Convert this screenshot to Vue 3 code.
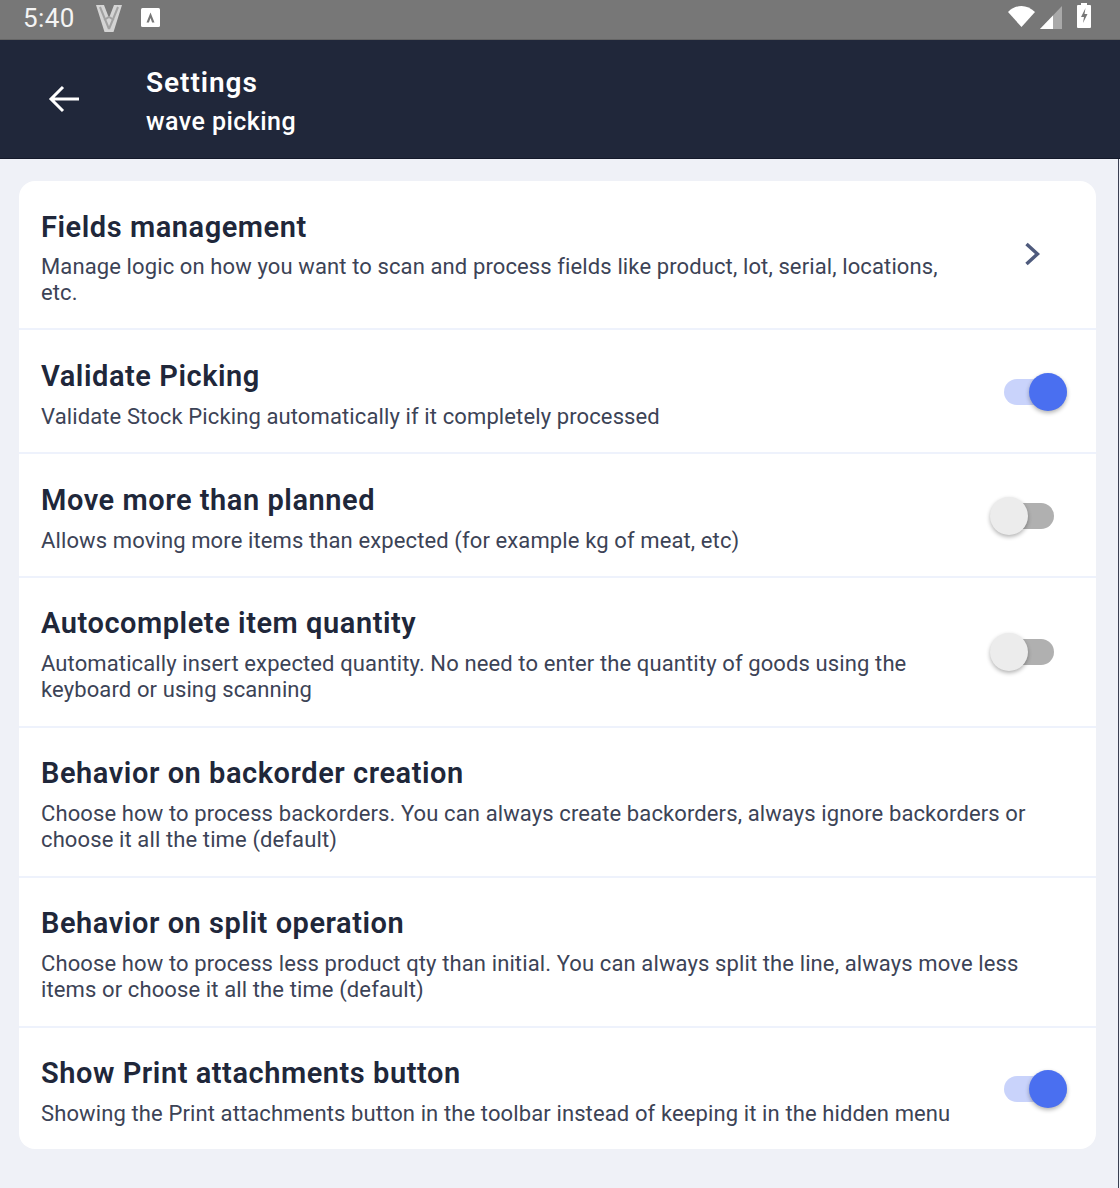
<script setup>
const rows = [
  { title: 'Fields management', desc: 'Manage logic on how you want to scan and process fields like product, lot, serial, locations, etc.', kind: 'chevron' },
  { title: 'Validate Picking', desc: 'Validate Stock Picking automatically if it completely processed', kind: 'on' },
  { title: 'Move more than planned', desc: 'Allows moving more items than expected (for example kg of meat, etc)', kind: 'off' },
  { title: 'Autocomplete item quantity', desc: 'Automatically insert expected quantity. No need to enter the quantity of goods using the keyboard or using scanning', kind: 'off' },
  { title: 'Behavior on backorder creation', desc: 'Choose how to process backorders. You can always create backorders, always ignore backorders or choose it all the time (default)', kind: 'none' },
  { title: 'Behavior on split operation', desc: 'Choose how to process less product qty than initial. You can always split the line, always move less items or choose it all the time (default)', kind: 'none' },
  { title: 'Show Print attachments button', desc: 'Showing the Print attachments button in the toolbar instead of keeping it in the hidden menu', kind: 'on' }
]
</script>

<template>
  <div class="page">
    <div class="status">
      <span class="time">5:40</span>
      <svg class="vlogo" width="26" height="28" viewBox="0 0 26 28">
        <path d="M0 1h8l5 13 5-13h8l-8.500 27h-9z" fill="#d4d4d4" />
        <path d="M4 3l9 22M8 16l5-3 5 3M22 3l-9 22" stroke="#a2a2a2" stroke-width="2" fill="none" />
      </svg>
      <svg class="alogo" width="19" height="19" viewBox="0 0 19 19">
        <rect width="19" height="19" rx="1.500" fill="#fff" />
        <path d="M9.500 4.500l4 10h-2.400l-1.600-4.400-1.600 4.400h-2.400z" fill="#777" />
      </svg>
      <span class="spacer"></span>
      <svg width="27" height="21" viewBox="0 0 27 21" class="wifi">
        <path d="M0 6C8-2 19-2 27 6L13.500 21z" fill="#fff" />
      </svg>
      <svg width="22" height="23" viewBox="0 0 22 23" class="signal">
        <path d="M0 23L22 0v23z" fill="#a9a9a9" />
        <path d="M0 23l13-13.500V23z" fill="#fff" />
      </svg>
      <svg width="14" height="25" viewBox="0 0 14 25" class="battery">
        <path d="M4 0h6v2h3a1 1 0 0 1 1 1v21a1 1 0 0 1-1 1H1a1 1 0 0 1-1-1V3a1 1 0 0 1 1-1h3z" fill="#fff" />
        <path d="M8.500 5L4 14h3l-1 6 4.500-9H7.500z" fill="#777" />
      </svg>
    </div>
    <header class="bar">
      <svg class="back" width="32" height="32" viewBox="0 0 32 32">
        <path d="M31 16H3M15 4L3 16l12 12" fill="none" stroke="#fff" stroke-width="3" />
      </svg>
      <div class="heading">
        <div class="h1">Settings</div>
        <div class="h2">wave picking</div>
      </div>
    </header>
    <main class="content">
      <section class="card">
        <div v-for="r in rows" :key="r.title" class="row" :class="'k-' + r.kind">
          <div class="text">
            <div class="title">{{ r.title }}</div>
            <div class="desc">{{ r.desc }}</div>
          </div>
          <svg v-if="r.kind === 'chevron'" class="chev" width="16" height="24" viewBox="0 0 16 24">
            <path d="M2.500 2l11 10-11 10" fill="none" stroke="#4f5b7d" stroke-width="3.500" />
          </svg>
          <div v-else-if="r.kind === 'on' || r.kind === 'off'" class="toggle" :class="r.kind">
            <span class="track"></span>
            <span class="thumb"></span>
          </div>
        </div>
      </section>
    </main>
  </div>
</template>

<style>
html, body { margin: 0; background: #f0f1f7; }
</style>

<style scoped>
.page {
  width: 1120px;
  height: 1188px;
  background: #eff1f7;
  font-family: Roboto, "Noto Sans", sans-serif;
  overflow: hidden;
  display: flex;
  flex-direction: column;
}
.status {
  height: 39px;
  box-sizing: content-box;
  background: #777;
  border-bottom: 1px solid #666;
  display: flex;
  align-items: center;
  padding: 0 29px 0 23px;
  color: #fff;
}
.time { font-size: 26px; letter-spacing: 0.4px; color: #f4f4f4; margin-top: -4px; }
.vlogo { margin-left: 21px; margin-top: -4px; }
.alogo { margin-left: 19px; margin-top: -4px; }
.spacer { flex: 1; }
.signal { margin-left: 5px; margin-top: -5px; }
.battery { margin-left: 15px; margin-top: -8px; }
.wifi { margin-top: -6px; }
.bar {
  height: 118px;
  background: #20273a;
  border-bottom: 1px solid #14192a;
  display: flex;
  align-items: center;
  padding-left: 48px;
  color: #fff;
}
.back { flex: none; }
.heading { margin-left: 66px; margin-top: 8px; }
.h1 { font-size: 28px; font-weight: 600; letter-spacing: 0.95px; line-height: 38px; }
.h2 { font-size: 25px; font-weight: 500; letter-spacing: 0.45px; line-height: 40px; }
.content {
  flex: 1;
  padding: 22px 22px 0 19px;
  border-right: 1px solid #3a3f52;
  margin-right: 1px;
}
.card {
  background: #fff;
  border-radius: 16px;
  overflow: hidden;
}
.row {
  display: flex;
  align-items: center;
  justify-content: space-between;
  padding: 23.500px 29px 22.500px 22px;
  border-bottom: 2px solid #eef2fc;
}
.row:first-child { padding-bottom: 22px; }
.row:nth-child(n+4) { padding-top: 22.500px; padding-bottom: 23.500px; }
.row:last-child { border-bottom: 0; padding-bottom: 22.500px; }
.text { flex: 1; }
.k-chevron .text, .k-off .text { max-width: 900px; }
.title {
  font-size: 29px;
  font-weight: 600;
  letter-spacing: 0.55px;
  line-height: 44px;
  color: #20273a;
}
.desc {
  margin-top: 6px;
  font-size: 22px;
  letter-spacing: 0.115px;
  line-height: 26px;
  color: #3c4356;
}
.k-chevron .desc { margin-top: 5.500px; }
.chev { margin-right: 27px; margin-bottom: 2px; }
.toggle { position: relative; width: 63px; height: 38px; flex: none; }
.track {
  position: absolute;
  left: 0;
  top: 6px;
  width: 63px;
  height: 26px;
  border-radius: 13px;
}
.thumb {
  position: absolute;
  top: 0;
  width: 38px;
  height: 38px;
  border-radius: 50%;
  box-shadow: 0 2px 4px rgba(0, 0, 0, 0.3);
}
.toggle.on .track { background: #c9d3fb; }
.toggle.on .thumb { right: 0; background: #4a6ff0; }
.toggle.off { margin-right: 13px; }
.toggle.off .track { background: #b0b0b0; }
.toggle.off .thumb { left: -1px; background: #ececec; }
</style>
